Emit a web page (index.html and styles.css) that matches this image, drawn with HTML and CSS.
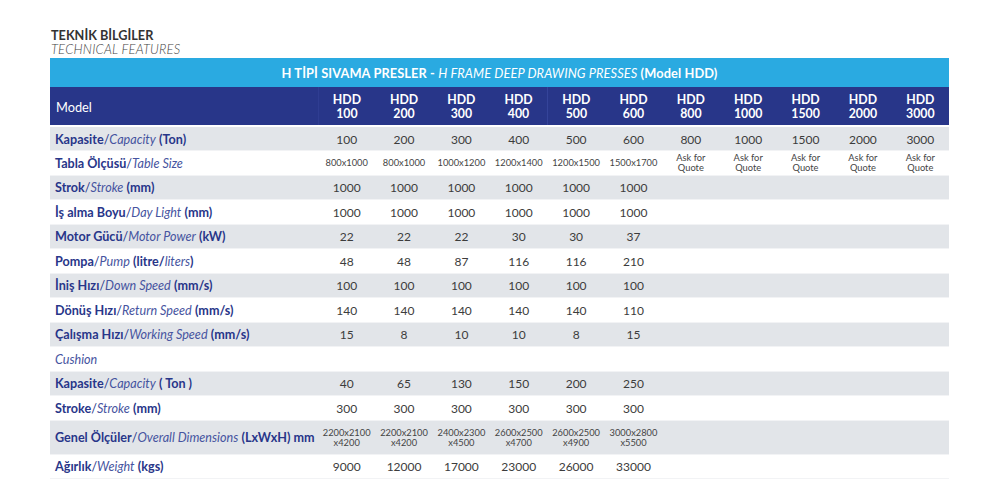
FILE: index.html
```html
<!DOCTYPE html>
<html lang="tr">
<head>
<meta charset="utf-8">
<title>Teknik Bilgiler</title>
<link rel="stylesheet" href="styles.css">
</head>
<body>
<div class="page">
  <div class="heading">
    <div class="h-tr">TEKNİK BİLGİLER</div>
    <div class="h-en">TECHNICAL FEATURES</div>
  </div>
  <table class="spec">
    <colgroup>
      <col class="c-label">
      <col span="11" class="c-val">
    </colgroup>
    <thead>
      <tr class="title-row"><th colspan="12">H TİPİ SIVAMA PRESLER - <i>H FRAME DEEP DRAWING PRESSES</i> (Model HDD)</th></tr>
      <tr class="model-row">
        <th class="lbl">Model</th>
        <th class="first">HDD<br>100</th><th>HDD<br>200</th><th>HDD<br>300</th><th>HDD<br>400</th>
        <th class="sep">HDD<br>500</th><th>HDD<br>600</th><th>HDD<br>800</th><th>HDD<br>1000</th>
        <th>HDD<br>1500</th><th>HDD<br>2000</th><th>HDD<br>3000</th>
      </tr>
    </thead>
    <tbody>
      <tr class="g"><td class="lbl"><b>Kapasite</b>/<i>Capacity</i> <b>(Ton)</b></td><td>100</td><td>200</td><td>300</td><td>400</td><td>500</td><td>600</td><td>800</td><td>1000</td><td>1500</td><td>2000</td><td>3000</td></tr>
      <tr><td class="lbl"><b>Tabla Ölçüsü</b>/<i>Table Size</i></td><td class="sm">800x1000</td><td class="sm">800x1000</td><td class="sm">1000x1200</td><td class="sm">1200x1400</td><td class="sm">1200x1500</td><td class="sm">1500x1700</td><td class="sm">Ask for<br>Quote</td><td class="sm">Ask for<br>Quote</td><td class="sm">Ask for<br>Quote</td><td class="sm">Ask for<br>Quote</td><td class="sm">Ask for<br>Quote</td></tr>
      <tr class="g"><td class="lbl"><b>Strok</b>/<i>Stroke</i> <b>(mm)</b></td><td>1000</td><td>1000</td><td>1000</td><td>1000</td><td>1000</td><td>1000</td><td></td><td></td><td></td><td></td><td></td></tr>
      <tr><td class="lbl"><b>İş alma Boyu</b>/<i>Day Light</i> <b>(mm)</b></td><td>1000</td><td>1000</td><td>1000</td><td>1000</td><td>1000</td><td>1000</td><td></td><td></td><td></td><td></td><td></td></tr>
      <tr class="g"><td class="lbl"><b>Motor Gücü</b>/<i>Motor Power</i> <b>(kW)</b></td><td>22</td><td>22</td><td>22</td><td>30</td><td>30</td><td>37</td><td></td><td></td><td></td><td></td><td></td></tr>
      <tr><td class="lbl"><b>Pompa</b>/<i>Pump</i> <b>(litre/</b><i>liters</i><b>)</b></td><td>48</td><td>48</td><td>87</td><td>116</td><td>116</td><td>210</td><td></td><td></td><td></td><td></td><td></td></tr>
      <tr class="g"><td class="lbl"><b>İniş Hızı</b>/<i>Down Speed</i> <b>(mm/s)</b></td><td>100</td><td>100</td><td>100</td><td>100</td><td>100</td><td>100</td><td></td><td></td><td></td><td></td><td></td></tr>
      <tr><td class="lbl"><b>Dönüş Hızı</b>/<i>Return Speed</i> <b>(mm/s)</b></td><td>140</td><td>140</td><td>140</td><td>140</td><td>140</td><td>110</td><td></td><td></td><td></td><td></td><td></td></tr>
      <tr class="g"><td class="lbl"><b>Çalışma Hızı</b>/<i>Working Speed</i> <b>(mm/s)</b></td><td>15</td><td>8</td><td>10</td><td>10</td><td>8</td><td>15</td><td></td><td></td><td></td><td></td><td></td></tr>
      <tr><td class="lbl"><i>Cushion</i></td><td></td><td></td><td></td><td></td><td></td><td></td><td></td><td></td><td></td><td></td><td></td></tr>
      <tr class="g"><td class="lbl"><b>Kapasite</b>/<i>Capacity</i> <b>( Ton )</b></td><td>40</td><td>65</td><td>130</td><td>150</td><td>200</td><td>250</td><td></td><td></td><td></td><td></td><td></td></tr>
      <tr><td class="lbl"><b>Stroke</b>/<i>Stroke</i> <b>(mm)</b></td><td>300</td><td>300</td><td>300</td><td>300</td><td>300</td><td>300</td><td></td><td></td><td></td><td></td><td></td></tr>
      <tr class="g tall"><td class="lbl"><b>Genel Ölçüler</b>/<i>Overall Dimensions</i> <b>(LxWxH) mm</b></td><td class="sm">2200x2100<br>x4200</td><td class="sm">2200x2100<br>x4200</td><td class="sm">2400x2300<br>x4500</td><td class="sm">2600x2500<br>x4700</td><td class="sm">2600x2500<br>x4900</td><td class="sm">3000x2800<br>x5500</td><td></td><td></td><td></td><td></td><td></td></tr>
      <tr><td class="lbl"><b>Ağırlık</b>/<i>Weight</i> <b>(kgs)</b></td><td>9000</td><td>12000</td><td>17000</td><td>23000</td><td>26000</td><td>33000</td><td></td><td></td><td></td><td></td><td></td></tr>
    </tbody>
  </table>
</div>
</body>
</html>
```

FILE: styles.css
```css
html, body {
  margin: 0;
  padding: 0;
  background: #ffffff;
}

body {
  font-family: Lato, "Noto Sans", "Liberation Sans", sans-serif;
  color: #3a3a3a;
}

.page {
  padding: 28px 51px 0 50px;
}

.heading {
  padding-left: 1px;
  margin-bottom: 2px;
}

.h-tr {
  font-size: 12.7px;
  font-weight: 700;
  color: #333333;
  line-height: 14px;
}

.h-en {
  font-size: 13px;
  font-style: italic;
  font-weight: 300;
  color: #444444;
  line-height: 14px;
  letter-spacing: 0.2px;
}

.spec {
  width: 899px;
  border-collapse: collapse;
  border-spacing: 0;
  table-layout: fixed;
}

.c-label {
  width: 268px;
}

.c-val {
  width: 57.36px;
}

.spec th,
.spec td {
  padding: 0;
  text-align: center;
  vertical-align: middle;
}

.title-row th {
  background: #2aaae1;
  color: #ffffff;
  height: 29px;
  font-size: 12.8px;
  font-weight: 700;
  letter-spacing: 0.1px;
}

.title-row th i {
  font-weight: 400;
}

.model-row th {
  background: #283689;
  color: #ffffff;
  height: 36px;
  padding-top: 2px;
  font-size: 12.3px;
  font-weight: 700;
  line-height: 14px;
  border-bottom: 2px solid #ffffff;
}

.model-row th.lbl {
  text-align: left;
  padding-left: 6px;
  font-weight: 400;
  font-size: 12.8px;
  border-right: 1px solid #2f3d92;
}

.model-row th.sep {
  border-left: 1px solid #35449a;
}

.spec tbody tr {
  height: 24.5px;
}

.spec tbody tr.tall {
  height: 34px;
}

.spec tbody tr.g td {
  background: #e2e5e9;
}

.spec tbody td {
  font-size: 12px;
  color: #3c3c3c;
  border-bottom: 1px solid #f2f3f5;
  padding-top: 1px;
}

.spec tbody td.lbl {
  text-align: left;
  padding-left: 5px;
  color: #283689;
  font-size: 12.6px;
  white-space: nowrap;
}

.lbl b {
  font-weight: 700;
}

.lbl i {
  font-weight: 400;
  color: #4654a0;
}

.spec tbody td.sm {
  font-size: 9.3px;
  line-height: 10px;
  color: #444444;
}
```
